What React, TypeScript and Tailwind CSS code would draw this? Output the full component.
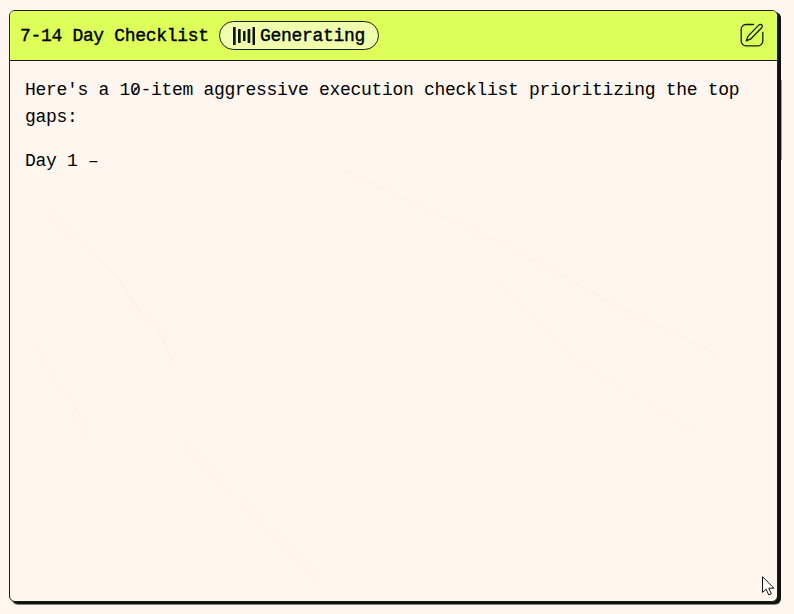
const mono = 'font-["Liberation_Mono",monospace]';

function Bars() {
  return (
    <svg width="22" height="20" viewBox="0 0 22 20" fill="#10150a" className="shrink-0">
      <rect x="0" y="1" width="2.7" height="18" rx="0.5" />
      <rect x="5" y="3" width="2.7" height="14" rx="0.5" />
      <rect x="10" y="5" width="2.5" height="10" rx="0.5" />
      <rect x="14.6" y="3" width="2.7" height="14" rx="0.5" />
      <rect x="19.5" y="1" width="2.5" height="18" rx="0.5" />
    </svg>
  );
}

function EditIcon() {
  return (
    <svg width="24" height="24" viewBox="0 0 24 24" fill="none" stroke="#10200c" strokeWidth="1.3" strokeLinecap="round" strokeLinejoin="round">
      <path d="M13.5 1.5H6A4.8 4.8 0 0 0 1.2 6.3V18A4.8 4.8 0 0 0 6 22.8H18a4.8 4.8 0 0 0 4.8-4.8V9.5" />
      <path d="M19 1.9c1-.9 2.2-.7 2.9.1.7.8.6 1.9-.2 2.8L11 15.8l-4.8 2.1 1.9-4.8Z" />
    </svg>
  );
}

function SlashedZero() {
  return (
    <span className="relative">
      0
      <svg className="absolute left-[0px] top-[4px]" width="10" height="12" viewBox="0 0 10 12" stroke="black" strokeWidth="1.1">
        <path d="M2.4 9.6 8 2.4" />
      </svg>
    </span>
  );
}

function Traces() {
  return (
    <svg className="pointer-events-none absolute inset-0" width="767" height="590" fill="none" stroke="#f7f0ea" strokeWidth="1">
      <path d="M38 200 108 267 132 304 148 319 164 352" />
      <path d="M174 433 308 568" />
      <path d="M335 160 500 236 615 299 705 342" strokeDasharray="8 4" />
      <path d="M490 275 570 351 630 388 690 425" strokeDasharray="3 7" />
      <path d="M29 335 45 373 63 390 79 432" strokeDasharray="4 4" />
    </svg>
  );
}

export default function App() {
  return (
    <div className={`h-[614px] w-[794px] overflow-hidden bg-[#fff6ef] pl-[9px] pt-[10px] text-black ${mono}`}>
      <section className="relative flex h-[592px] w-[769px] flex-col rounded-[6px] border border-[#19200f] bg-[#fff6ef] shadow-[3px_2px_0_0_#10110f,3px_3px_0_0_#7f887a]">
        <Traces />
        <header className="flex h-[50px] shrink-0 items-center rounded-t-[5px] border-b border-[#10180a] bg-[#deff5a] pl-[10px] pr-[13px]">
          <h1 className="w-[199px] whitespace-pre text-[18px] leading-[24px] tracking-[-0.32px] [-webkit-text-stroke:0.4px_black]">7-14 Day Checklist</h1>
          <div className="flex h-[29px] w-[160px] items-center gap-[5px] rounded-full border border-[#16210c] bg-[#efffac] pl-[13px]">
            <Bars />
            <span className="text-[18px] leading-[24px] tracking-[-0.3px] [-webkit-text-stroke:0.4px_black]">Generating</span>
          </div>
          <button className="mb-[2px] ml-auto" aria-label="Edit">
            <EditIcon />
          </button>
        </header>
        <div className="relative px-[15px] pt-[16px] text-[18px] leading-[27px] tracking-[-0.3px]">
          <p>
            Here's a 1<SlashedZero />-item aggressive execution checklist prioritizing the top
            <br />
            gaps:
          </p>
          <p className="mt-[17px]">Day 1 –</p>
        </div>
        <div className="absolute -right-[5px] top-[69px] h-[80px] w-px bg-[#a89da0]" />
        <svg className="absolute left-[752px] top-[565px]" width="13" height="20" viewBox="0 0 13 20" fill="#fff" stroke="#101010" strokeWidth="1" strokeLinejoin="round">
          <path d="M.5.7V16.5l3.6-3.4 2.6 5.8 2.6-1.1-2.5-5.6h5.1Z" />
        </svg>
      </section>
    </div>
  );
}
